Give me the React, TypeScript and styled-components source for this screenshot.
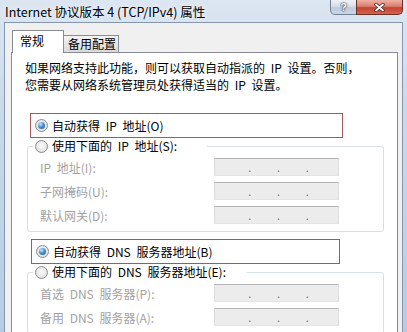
import React, { ReactElement } from 'react';
import styled, { createGlobalStyle } from 'styled-components';

const GlobalStyle = createGlobalStyle`
  html, body {
    margin: 0;
    padding: 0;
  }
  body {
    width: 407px;
    height: 332px;
    overflow: hidden;
    font-family: "Noto Sans CJK SC", "Liberation Sans", sans-serif;
    font-size: 12px;
    color: #000;
  }
`;

// 窗口外框
const Window = styled.div`
  display: flex;
  flex-direction: column;
  width: 407px;
  height: 332px;
  overflow: hidden;
  background: linear-gradient(180deg, #dce6f1 0%, #c8d9ec 35%, #b6cce5 100%);
`;

const TitleBar = styled.div`
  display: flex;
  justify-content: space-between;
  align-items: flex-start;
  height: 22px;
  flex: none;
`;

const Title = styled.div`
  padding: 4px 0 0 5px;
  font-size: 12.5px;
  line-height: 15px;
  text-shadow: 0 0 5px rgba(255, 255, 255, 0.95);
`;

const Controls = styled.div`
  display: flex;
  margin-right: 4px;
`;

const CaptionButton = styled.div<{ $close?: boolean }>`
  display: flex;
  align-items: center;
  justify-content: center;
  box-sizing: border-box;
  height: 15px;
  width: ${p => (p.$close ? 47 : 27)}px;
  margin-left: ${p => (p.$close ? -1 : 0)}px;
  border: 1px solid ${p => (p.$close ? '#6e2f27' : '#6f7f94')};
  border-top: none;
  border-radius: ${p => (p.$close ? '0 0 5px 0' : '0 0 0 5px')};
  background: ${p =>
    p.$close
      ? 'linear-gradient(180deg, #ecb1a5 0%, #d9806f 45%, #c4432e 55%, #d2644d 100%)'
      : 'linear-gradient(180deg, #eef2f7 0%, #d6dfea 45%, #bccadb 55%, #cbd7e5 100%)'};
  color: #fff;
  font-family: "Liberation Sans", sans-serif;
  font-weight: bold;
  font-size: 11px;
  line-height: 12px;
  text-shadow: 0 0 1px #3a4a5e, 0 0 1px #3a4a5e, 0 0 2px #3a4a5e;
`;

const Client = styled.div`
  flex: 1;
  display: flex;
  flex-direction: column;
  margin: 0 4px;
  padding-top: 7px;
  border: 1px solid #8697ad;
  border-bottom: none;
  background: #f0f0f0;
`;

const TabStrip = styled.div`
  display: flex;
  align-items: flex-end;
  padding-left: 7px;
  margin-bottom: -1px;
  position: relative;
  z-index: 1;
`;

const Tab = styled.div<{ $active?: boolean }>`
  box-sizing: border-box;
  position: relative;
  z-index: ${p => (p.$active ? 2 : 1)};
  width: ${p => (p.$active ? 52 : 56)}px;
  height: ${p => (p.$active ? 23 : 18)}px;
  margin-left: ${p => (p.$active ? 0 : -1)}px;
  padding-left: ${p => (p.$active ? 7 : 4)}px;
  border: 1px solid #898c95;
  border-bottom: ${p => (p.$active ? 'none' : '1px solid #898c95')};
  background: ${p => (p.$active ? '#fff' : 'linear-gradient(180deg, #f4f4f4 0%, #e6e6e6 50%, #d9d9d9 100%)')};
  font-size: 12px;
  line-height: ${p => (p.$active ? 20 : 16)}px;
`;

const Panel = styled.div`
  margin: 0 4px 0 6px;
  padding: 6px 0 20px 13px;
  border: 1px solid #898c95;
  background: #fff;
  word-spacing: 3px;
`;

const Intro = styled.p`
  margin: 0;
  line-height: 17px;
`;

// 红框
const Highlight = styled.div<{ $top: number; $left: number; $width: number }>`
  box-sizing: border-box;
  display: flex;
  align-items: center;
  gap: 4px;
  height: 25px;
  width: ${p => p.$width}px;
  margin: ${p => p.$top}px 0 0 ${p => p.$left}px;
  padding-left: 4px;
  border: 1px solid #a85656;
`;

const Radio = styled.span<{ $checked?: boolean }>`
  position: relative;
  flex: none;
  box-sizing: border-box;
  width: 13px;
  height: 13px;
  border-radius: 50%;
  border: 1px solid #8a8c8e;
  background: radial-gradient(circle at 50% 45%, #fbfbfb 0%, #e6e6e6 60%, #d2d2d2 100%);
  &::after {
    content: '';
    position: absolute;
    left: 2px;
    top: 2px;
    width: 7px;
    height: 7px;
    border-radius: 50%;
    background: ${p =>
      p.$checked
        ? 'radial-gradient(circle at 35% 30%, #c4e9ff 0%, #4a93d4 45%, #1a4d88 100%)'
        : 'transparent'};
  }
`;

const Group = styled.fieldset`
  box-sizing: border-box;
  width: 357px;
  margin: 1px 0 0 2px;
  padding: 2px 0 4px 5px;
  border: 1px solid #d5dfe5;
  border-radius: 3px;
  min-width: 0;
`;

const GroupLegend = styled.legend<{ $width: number }>`
  display: flex;
  align-items: center;
  gap: 4px;
  box-sizing: border-box;
  width: ${p => p.$width}px;
  padding: 0 0 0 2px;
  height: 14px;
  line-height: 14px;
  background: #fff;
`;

const FieldRow = styled.div`
  display: grid;
  grid-template-columns: 174px 125px;
  align-items: center;
  height: 24px;
  padding-left: 7px;
`;

const FieldLabel = styled.span`
  color: #a2a2a2;
`;

const IpBox = styled.div`
  box-sizing: border-box;
  display: flex;
  align-items: flex-end;
  height: 18px;
  padding: 0 4px 2px 8px;
  border: 1px solid;
  border-color: #b5b5b5 #dcdcdc #e4e4e4 #dcdcdc;
  background: #ececec;
`;

const Octet = styled.span`
  flex: 1;
`;

const Dot = styled.span`
  width: 4px;
  color: #6c6c6c;
  font-size: 11px;
  line-height: 11px;
  text-align: center;
`;

function IpField(): ReactElement {
  return (
    <IpBox>
      <Octet />
      <Dot>.</Dot>
      <Octet />
      <Dot>.</Dot>
      <Octet />
      <Dot>.</Dot>
      <Octet />
    </IpBox>
  );
}

function CloseGlyph(): ReactElement {
  return (
    <svg width="11" height="9" viewBox="0 0 11 9">
      <path d="M2 1.5 L9 7.5 M9 1.5 L2 7.5" stroke="#4a2420" strokeWidth="3.4" strokeLinecap="round" />
      <path d="M2 1.5 L9 7.5 M9 1.5 L2 7.5" stroke="#fff" strokeWidth="1.8" strokeLinecap="round" />
    </svg>
  );
}

function App(): ReactElement {
  return (
    <Window>
      <GlobalStyle />

      <TitleBar>
        <Title>Internet 协议版本 4 (TCP/IPv4) 属性</Title>
        <Controls>
          <CaptionButton>?</CaptionButton>
          <CaptionButton $close>
            <CloseGlyph />
          </CaptionButton>
        </Controls>
      </TitleBar>

      <Client>
        <TabStrip>
          <Tab $active>常规</Tab>
          <Tab>备用配置</Tab>
        </TabStrip>

        <Panel>
          <Intro>
            如果网络支持此功能，则可以获取自动指派的 IP 设置。否则，
            <br />
            您需要从网络系统管理员处获得适当的 IP 设置。
          </Intro>

          <Highlight $top={20} $left={5} $width={313}>
            <Radio $checked />
            自动获得 IP 地址(O)
          </Highlight>

          <Group>
            <GroupLegend $width={174}>
              <Radio />
              使用下面的 IP 地址(S):
            </GroupLegend>
            <FieldRow>
              <FieldLabel>IP 地址(I):</FieldLabel>
              <IpField />
            </FieldRow>
            <FieldRow>
              <FieldLabel>子网掩码(U):</FieldLabel>
              <IpField />
            </FieldRow>
            <FieldRow>
              <FieldLabel>默认网关(D):</FieldLabel>
              <IpField />
            </FieldRow>
          </Group>

          <Highlight $top={7} $left={6} $width={309}>
            <Radio $checked />
            自动获得 DNS 服务器地址(B)
          </Highlight>

          <Group>
            <GroupLegend $width={214}>
              <Radio />
              使用下面的 DNS 服务器地址(E):
            </GroupLegend>
            <FieldRow>
              <FieldLabel>首选 DNS 服务器(P):</FieldLabel>
              <IpField />
            </FieldRow>
            <FieldRow>
              <FieldLabel>备用 DNS 服务器(A):</FieldLabel>
              <IpField />
            </FieldRow>
          </Group>
        </Panel>
      </Client>
    </Window>
  );
}

export default App;
